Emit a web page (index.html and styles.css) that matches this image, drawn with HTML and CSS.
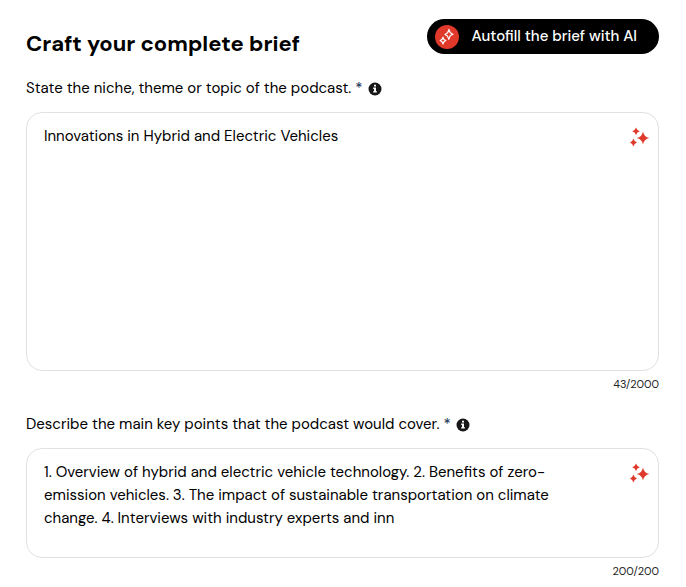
FILE: index.html
```
<!DOCTYPE html>
<html lang="en">
<head>
  <meta charset="UTF-8">
  <meta name="viewport" content="width=device-width, initial-scale=1.0">
  <title>Craft your complete brief</title>
  <link rel="stylesheet" href="styles.css">
</head>
<body>

  <!-- shared icons -->
  <svg class="icon-defs" aria-hidden="true">
    <symbol id="icon-info" viewBox="0 0 14 14">
      <circle cx="7" cy="7" r="6.5" fill="#171717"/>
      <path d="M6 2.7h2v1.8H6zM5.2 5.6H8v3.7h.9v1.3H5.1V9.3H6V6.9h-.8z" fill="#fff"/>
    </symbol>
    <symbol id="icon-sparkles" viewBox="0 0 20 20">
      <path d="M13 4.5Q14 10 19.3 11Q14 12 13 17.5Q12 12 6.7 11Q12 10 13 4.5z"/>
      <path d="M6 .4Q6.9 3.4 9.8 4.2Q6.9 5 6 8Q5.1 5 2.2 4.2Q5.1 3.4 6 .4z"/>
      <path d="M3.4 11.5Q4.2 14.7 7 15.5Q4.2 16.3 3.4 19.5Q2.6 16.3 0 15.5Q2.6 14.7 3.4 11.5z"/>
    </symbol>
  </svg>

  <form class="brief">
    <header class="brief-header">
      <h1>Craft your complete brief</h1>
      <button type="button" class="autofill">
        <svg class="autofill-icon" viewBox="0 0 24 24" aria-hidden="true">
          <circle cx="12" cy="12" r="12" fill="#e0382a"/>
          <g fill="none" stroke="#fff" stroke-width="1.2" stroke-linejoin="round">
            <path d="M14 4.4L15.2 7.8L18 9.2L15.2 10.8L13.8 14.4L12.4 10.9L10 9.4L12.6 7.8z"/>
            <path d="M8 12.2L8.9 14.5L10.8 15.5L8.9 16.7L8 19L7 16.7L5.2 15.6L7 14.5z"/>
          </g>
        </svg>
        Autofill the brief with AI
      </button>
    </header>

    <div class="field">
      <div class="field-label">
        <label for="topic">State the niche, theme or topic of the podcast. <span class="required">*</span></label>
        <svg class="info"><use href="#icon-info"/></svg>
      </div>
      <div class="field-box">
        <textarea id="topic" rows="10" maxlength="2000">Innovations in Hybrid and Electric Vehicles</textarea>
        <button type="button" class="suggest" aria-label="Suggest a topic"><svg><use href="#icon-sparkles"/></svg></button>
      </div>
      <p class="counter">43/2000</p>
    </div>

    <div class="field">
      <div class="field-label">
        <label for="points">Describe the main key points that the podcast would cover. <span class="required">*</span></label>
        <svg class="info"><use href="#icon-info"/></svg>
      </div>
      <div class="field-box">
        <textarea id="points" class="short" rows="3" maxlength="200">1. Overview of hybrid and electric vehicle technology. 2. Benefits of zero-emission vehicles. 3. The impact of sustainable transportation on climate change. 4. Interviews with industry experts and inn</textarea>
        <button type="button" class="suggest" aria-label="Suggest key points"><svg><use href="#icon-sparkles"/></svg></button>
      </div>
      <p class="counter">200/200</p>
    </div>
  </form>

</body>
</html>
```
FILE: styles.css
```
*, *::before, *::after { box-sizing: border-box; margin: 0; padding: 0; }

body {
  font-family: "DM Sans", Inter, "Liberation Sans", sans-serif;
  font-size: 15px;
  line-height: 23px;
  color: #000;
  background: #fff;
}

button, textarea { font: inherit; color: inherit; }
button { border: 0; background: none; cursor: pointer; }

.icon-defs { display: none; }

.brief { padding: 19px 27px 0 26px; }

/* header */
.brief-header {
  display: flex;
  justify-content: space-between;
  align-items: flex-start;
  margin-bottom: 19px;
}
.brief-header h1 {
  padding-top: 11px;
  font-size: 22px;
  line-height: 28px;
  font-weight: 700;
}
.autofill {
  display: flex;
  align-items: center;
  gap: 12px;
  height: 35px;
  padding: 0 22px 0 8px;
  border-radius: 18px;
  background: #000;
  color: #fff;
  font-weight: 500;
  white-space: nowrap;
}
.autofill-icon { width: 24px; height: 24px; }

/* fields */
.field { margin-bottom: 20px; }
.field-label {
  display: flex;
  align-items: center;
  gap: 5px;
  margin-bottom: 12px;
}
.required { color: #0b1f4b; }
.info { width: 14px; height: 14px; }

.field-box { position: relative; }
.field-box textarea {
  display: block;
  width: 100%;
  height: 259px;
  padding: 12px 80px 12px 17px;
  border: 1px solid #e1e1e1;
  border-radius: 16px;
  background: #fff;
  resize: none;
  outline: none;
  overflow: hidden;
}
.field-box textarea.short { height: 110px; }

.suggest {
  position: absolute;
  top: 15px;
  right: 9px;
  width: 20px;
  height: 20px;
  color: #e0382a;
}
.suggest svg { display: block; width: 20px; height: 20px; fill: currentColor; }

.counter {
  margin-top: 4px;
  font-size: 11px;
  line-height: 18px;
  text-align: right;
  color: #222;
}
```
